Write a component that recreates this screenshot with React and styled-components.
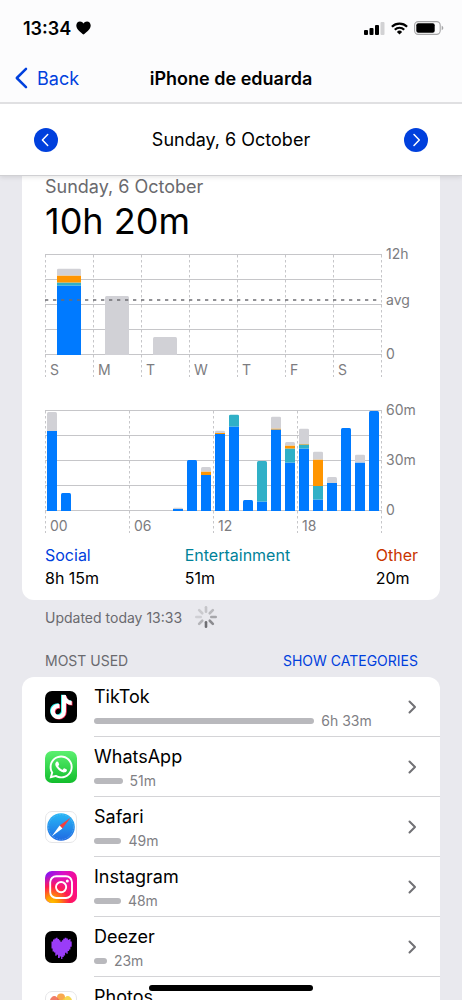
import React from 'react';
import styled, { createGlobalStyle } from 'styled-components';
import { FaTiktok, FaWhatsapp } from 'react-icons/fa';

const GlobalStyle = createGlobalStyle`
    * {
        box-sizing: border-box;
    }

    body {
        margin: 0;
        background: #e9e9ee;
        color: #000;
        font-family: Inter, 'Liberation Sans', sans-serif;
    }

    button {
        padding: 0;
        border: 0;
        background: none;
        font: inherit;
        cursor: pointer;
    }

    a {
        color: inherit;
        text-decoration: none;
    }

    svg {
        display: block;
    }
`;

const colors = {
    social: '#007aff',
    entertainment: '#30b0c7',
    other: '#ff9500',
    rest: '#d1d1d6',
};

const Page = styled.div`
    display: flex;
    flex-direction: column;
    height: 100vh;
    overflow: hidden;
`;

const Header = styled.header`
    flex: none;
    background: #fcfcfd;
    border-bottom: 1px solid #d0d0d3;
    box-shadow: 0 1px 5px rgba(0, 0, 0, 0.12);
    z-index: 1;
`;

const StatusBar = styled.div`
    display: flex;
    justify-content: space-between;
    align-items: center;
    height: 54px;
    padding: 2px 18px 0 23px;
`;

const Clock = styled.div`
    display: flex;
    align-items: center;
    gap: 5px;
    font-size: 18px;
    font-weight: 600;
`;

const StatusIcons = styled.div`
    display: flex;
    align-items: center;
    gap: 6px;
`;

const NavBar = styled.nav`
    display: grid;
    grid-template-columns: 1fr auto 1fr;
    align-items: center;
    height: 50px;
    padding: 0 15px;
    border-bottom: 2px solid #e0e0e2;
`;

const BackLink = styled.a`
    display: flex;
    align-items: center;
    gap: 9px;
    color: #0040dd;
    font-size: 18px;
`;

const Title = styled.h1`
    margin: 0;
    font-size: 18px;
    font-weight: 600;
`;

const DateBar = styled.div`
    display: flex;
    justify-content: space-between;
    align-items: center;
    height: 71px;
    padding: 0 34px;
    background: #fff;
    font-size: 18px;
`;

const Content = styled.main`
    display: flex;
    flex-direction: column;
    flex: 1;
    min-height: 0;
    padding: 0 22px;
    overflow: hidden;
`;

const UsageCard = styled.section`
    flex: none;
    padding: 1px 22px 10px 23px;
    border-radius: 0 0 12px 12px;
    background: #fff;
`;

const UsageDate = styled.div`
    color: #6a6a6e;
    font-size: 18px;
    line-height: 20px;
`;

const Total = styled.div`
    font-size: 36px;
    line-height: 49px;
`;

const Chart = styled.svg`
    width: 100%;
    height: auto;
    margin-bottom: ${props => props.$gap || 0}px;

    text {
        fill: #7c7c80;
        font-size: 14px;
    }
`;

const Legend = styled.dl`
    display: flex;
    justify-content: space-between;
    margin: 0;
    font-size: 16px;
    line-height: 23px;

    dd {
        margin: 0;
    }
`;

const LegendName = styled.dt`
    color: ${props => props.$color};
`;

const Updated = styled.div`
    display: flex;
    align-items: center;
    flex: none;
    gap: 12px;
    height: 34px;
    padding: 0 23px;
    color: #6a6a6e;
    font-size: 14px;
`;

const ListHeader = styled.div`
    display: flex;
    justify-content: space-between;
    align-items: center;
    flex: none;
    height: 43px;
    padding: 10px 22px 0 23px;
    color: #6a6a6e;
    font-size: 14px;

    h2 {
        margin: 0;
        font-size: 14px;
        font-weight: 400;
    }

    button {
        color: #0040dd;
    }
`;

const AppList = styled.ul`
    flex: none;
    margin: 0;
    padding: 0;
    border-radius: 12px 12px 0 0;
    background: #fff;
    list-style: none;
`;

const AppRow = styled.a`
    display: flex;
    gap: 17px;
    height: 60px;
    padding-left: 23px;

    > svg {
        flex: none;
        margin-top: 14px;
    }
`;

const AppBody = styled.div`
    display: flex;
    align-items: center;
    flex: 1;
    gap: 8px;
    padding-right: 22px;
    border-bottom: 1px solid #d4d4d7;
`;

const AppInfo = styled.div`
    flex: 1;
    padding-top: 4px;
`;

const AppName = styled.div`
    font-size: 18px;
    line-height: 24px;
`;

const Usage = styled.div`
    display: flex;
    align-items: center;
    gap: 7px;
    color: #808084;
    font-size: 14px;
    line-height: 24px;
`;

const UsageBar = styled.div`
    height: 6px;
    border-radius: 3px;
    background: #b9b9bd;
`;

const HomeIndicator = styled.div`
    position: fixed;
    bottom: 9px;
    left: 50%;
    width: 164px;
    height: 6px;
    border-radius: 3px;
    background: #000;
    transform: translateX(-50%);
    z-index: 2;
`;

const Heart = () => (
    <svg width="15" height="14" viewBox="0 0 15 14">
        <path d="M7.5 13.6C5.6 12 .3 8.600.3 4.500.3 2 2 .4 4 .4c1.500 0 2.800.8 3.500 2.100C8.200 1.200 9.500.4 11 .4c2 0 3.700 1.600 3.700 4.100 0 4.100-5.300 7.500-7.200 9.100z" />
    </svg>
);

const Signal = () => (
    <svg width="21" height="13" viewBox="0 0 21 13">
        <rect x="0" y="8" width="4" height="5" rx="1" />
        <rect x="5.500" y="6" width="4" height="7" rx="1" />
        <rect x="11" y="3" width="4" height="10" rx="1" />
        <rect x="16.500" y="0" width="4" height="13" rx="1" fill="#d2d2d4" />
    </svg>
);

const Wifi = () => (
    <svg width="17" height="13" viewBox="0 0 17 13" fill="none" stroke="#000" strokeWidth="2.200">
        <path d="M.9 4.700a10.800 10.800 0 0 1 15.200 0" />
        <path d="M3.800 7.700a6.700 6.700 0 0 1 9.400 0" />
        <path d="M8.500 12.600L5.900 9.900a3.700 3.700 0 0 1 5.200 0z" fill="#000" stroke="none" />
    </svg>
);

const Battery = () => (
    <svg width="30" height="14" viewBox="0 0 30 14">
        <rect x=".6" y=".6" width="25.600" height="12.800" rx="3.600" fill="none" stroke="#a6a6a8" strokeWidth="1.100" />
        <rect x="2.300" y="2.200" width="18.400" height="9.600" rx="2" />
        <path d="M27.700 4.800c1 .4 1.600 1.200 1.600 2.200s-.6 1.800-1.600 2.200z" fill="#a6a6a8" />
    </svg>
);

const CircleArrow = ({ next }) => (
    <svg width="24" height="24" viewBox="0 0 24 24" fill="none">
        <circle cx="12" cy="12" r="12" fill="#0040dd" />
        <path
            d={next ? 'M10 6.500l5.300 5.500-5.300 5.500' : 'M13.700 6.500L8.400 12l5.300 5.500'}
            stroke="#fff"
            strokeWidth="1.500"
            strokeLinecap="round"
            strokeLinejoin="round"
        />
    </svg>
);

const Chevron = () => (
    <svg width="10" height="16" viewBox="0 0 10 16" fill="none" stroke="#717175" strokeWidth="2" strokeLinecap="round" strokeLinejoin="round">
        <path d="M1.500 2.500L7 8l-5.500 5.500" />
    </svg>
);

// clockwise from the top, darkest one at the bottom
const spokeColors = ['#c4c4c8', '#b9b9bd', '#a6a6aa', '#8c8c90', '#6f6f73', '#b4b4b8', '#cfcfd4', '#cacace'];

const Spinner = () => (
    <svg width="24" height="24" viewBox="0 0 24 24">
        {spokeColors.map((color, i) => (
            <rect key={i} x="10.700" y="1" width="2.600" height="7" rx="1.300" fill={color} transform={`rotate(${i * 45} 12 12)`} />
        ))}
    </svg>
);

const TikTokIcon = () => (
    <svg width="32" height="32" viewBox="0 0 32 32">
        <rect width="32" height="32" rx="7" />
        <FaTiktok x="3.400" y="3.400" size="24" color="#25f4ee" />
        <FaTiktok x="5" y="4.700" size="24" color="#fe2c55" />
        <FaTiktok x="4.200" y="4.100" size="24" color="#fff" />
    </svg>
);

const WhatsAppIcon = () => (
    <svg width="32" height="32" viewBox="0 0 32 32">
        <defs>
            <linearGradient id="whatsapp" x1="0" y1="0" x2="0" y2="1">
                <stop offset="0" stopColor="#5cf070" />
                <stop offset="1" stopColor="#12bd2c" />
            </linearGradient>
        </defs>
        <rect width="32" height="32" rx="7" fill="url(#whatsapp)" />
        <FaWhatsapp x="2.900" y="2.800" size="26.400" color="#fff" />
    </svg>
);

const SafariIcon = () => (
    <svg width="32" height="32" viewBox="0 0 32 32">
        <defs>
            <linearGradient id="safari" x1="0" y1="0" x2="0" y2="1">
                <stop offset="0" stopColor="#27b8f6" />
                <stop offset="1" stopColor="#2069e2" />
            </linearGradient>
        </defs>
        <rect x=".5" y=".5" width="31" height="31" rx="6.500" fill="#fff" stroke="#e6e6e8" />
        <circle cx="16" cy="16" r="13.800" fill="url(#safari)" />
        <circle cx="16" cy="16" r="12.400" fill="none" stroke="#8cc8f7" strokeWidth="1" strokeDasharray=".4 1.200" />
        <path d="M25.500 6.700L17.400 17.500 14.600 14.500z" fill="#f43f3d" />
        <path d="M6.600 25.400l8-10.900 2.800 3z" fill="#fff" />
    </svg>
);

const InstagramIcon = () => (
    <svg width="32" height="32" viewBox="0 0 32 32">
        <defs>
            <linearGradient id="instagram" x1="0" y1="0" x2="1" y2="0.400">
                <stop offset="0" stopColor="#7a14f5" />
                <stop offset=".5" stopColor="#d810c8" />
                <stop offset="1" stopColor="#fb0a86" />
            </linearGradient>
            <radialGradient id="instagramGlow" cx=".2" cy="1.050" r=".95">
                <stop offset="0" stopColor="#ffd000" />
                <stop offset=".25" stopColor="#ff9a00" />
                <stop offset=".6" stopColor="#ff1a50" />
                <stop offset="1" stopColor="#ff1a80" stopOpacity="0" />
            </radialGradient>
        </defs>
        <rect width="32" height="32" rx="7" fill="url(#instagram)" />
        <rect width="32" height="32" rx="7" fill="url(#instagramGlow)" />
        <g fill="none" stroke="#fff" strokeWidth="1.900">
            <rect x="5.200" y="5.200" width="21.800" height="21.800" rx="6" />
            <circle cx="16.100" cy="16.100" r="5.100" />
        </g>
        <circle cx="22.300" cy="9.900" r="1.500" fill="#fff" />
    </svg>
);

const DeezerIcon = () => (
    <svg width="32" height="32" viewBox="0 0 32 32">
        <rect width="32" height="32" rx="7" />
        <path
            d="M6.500 10.500H8V8.500h1.500V7.500H11v-.8h1.600v1.200h1.500v1.400h1.300v1.500h1.400V9.300h1.400V7.800h1.500V6.700h1.700v.8h1.500v1.200h1.400v-.7h1.200v2.600h1.200v5.200h-1.300v2.800h-1.300v1.500h-1.400v2.600h-1.300v-1h-1.300v2.800h-1.400v1.500h-1.300v1.900h-1.300v-2.300h-1.300v1.300H13v-3.200h-1.400v1h-1.300v-3.100H9v-1.200H7.600v-3H6.500z"
            fill="#9a3cf8"
        />
    </svg>
);

const petals = ['#f8a03c', '#f5d33f', '#b6d04c', '#65bd8b', '#6ba6dc', '#9b87cf', '#d0739f', '#ef6f58'];

const PhotosIcon = () => (
    <svg width="32" height="32" viewBox="0 0 32 32">
        <rect x=".5" y=".5" width="31" height="31" rx="6.500" fill="#fff" stroke="#e6e6e8" />
        {petals.map((color, i) => (
            <rect key={color} x="12" y="2.500" width="8" height="12.500" rx="4" fill={color} opacity=".9" transform={`rotate(${i * 45} 16 16)`} />
        ))}
    </svg>
);

// segment values are given in order from the bottom of the bar
const week = [
    { label: 'S', segments: [['social', 69.5], ['entertainment', 3], ['other', 7], ['rest', 7]] },
    { label: 'M', segments: [['rest', 59]] },
    { label: 'T', segments: [['rest', 18]] },
    { label: 'W', segments: [] },
    { label: 'T', segments: [] },
    { label: 'F', segments: [] },
    { label: 'S', segments: [] },
];

const hours = {
    0: [['social', 80], ['rest', 19]],
    1: [['social', 18]],
    9: [['social', 2], ['rest', 1.5]],
    10: [['social', 51]],
    11: [['social', 36], ['other', 3.5], ['rest', 4.5]],
    12: [['social', 77], ['other', 1], ['rest', 2.5]],
    13: [['social', 84.5], ['entertainment', 12]],
    14: [['social', 11]],
    15: [['social', 9.5], ['entertainment', 40.5]],
    16: [['social', 81.5], ['other', 1], ['rest', 12]],
    17: [['social', 48.5], ['entertainment', 14], ['other', 3], ['rest', 3.5]],
    18: [['social', 62.5], ['entertainment', 4], ['other', 0.5], ['rest', 15.5]],
    19: [['social', 11.5], ['entertainment', 13.5], ['other', 26.5], ['rest', 8]],
    20: [['social', 28], ['rest', 6]],
    21: [['social', 83]],
    22: [['social', 48.5], ['rest', 8]],
    23: [['social', 100]],
};

const apps = [
    { name: 'TikTok', minutes: 393, time: '6h 33m', Icon: TikTokIcon },
    { name: 'WhatsApp', minutes: 51, time: '51m', Icon: WhatsAppIcon },
    { name: 'Safari', minutes: 49, time: '49m', Icon: SafariIcon },
    { name: 'Instagram', minutes: 48, time: '48m', Icon: InstagramIcon },
    { name: 'Deezer', minutes: 23, time: '23m', Icon: DeezerIcon },
    { name: 'Photos', Icon: PhotosIcon },
];

const Bar = ({ id, x, base, width, segments }) => {
    const height = segments.reduce((sum, [, value]) => sum + value, 0);
    let y = base;

    return (
        <g clipPath={`url(#${id})`}>
            <clipPath id={id}>
                <path d={`M${x} ${base}V${base - height + 1.5}q0-1.500 1.500-1.500h${width - 3}q1.500 0 1.500 1.500V${base}z`} />
            </clipPath>
            {segments.map(([kind, value]) => {
                y -= value;
                return <rect key={kind} x={x} y={y} width={width} height={value} fill={colors[kind]} />;
            })}
        </g>
    );
};

const Grid = ({ columns }) => (
    <g stroke="#c6c6c9" fill="none">
        {[0, 1, 2, 3, 4].map(i => (
            <path key={i} d={`M0 ${8.5 + i * 25}H337`} />
        ))}
        {Array.from({ length: columns + 1 }, (_, i) => (
            <path key={i} d={`M${0.5 + i * (336 / columns)} 9V131`} strokeDasharray="2.500 2.500" />
        ))}
    </g>
);

const WeekChart = () => (
    <Chart viewBox="0 0 373 132" $gap={24} role="img" aria-label="Daily usage">
        <Grid columns={7} />
        {week.map(({ label, segments }, i) => (
            <g key={i}>
                {segments.length > 0 && <Bar id={`day${i}`} x={12 + i * 48} base={109} width={24} segments={segments} />}
                <text x={5 + i * 48} y="129">{label}</text>
            </g>
        ))}
        <path d="M0 54H336" stroke="#6e6e73" strokeWidth="1.500" strokeDasharray="3.300 4.700" />
        <text x="341" y="13">12h</text>
        <text x="341" y="59">avg</text>
        <text x="341" y="113">0</text>
    </Chart>
);

const HourChart = () => (
    <Chart viewBox="0 0 373 132" $gap={10} role="img" aria-label="Hourly usage">
        <Grid columns={4} />
        {Object.entries(hours).map(([hour, segments]) => (
            <Bar key={hour} id={`hour${hour}`} x={2 + hour * 14} base={109} width={10} segments={segments} />
        ))}
        {['00', '06', '12', '18'].map((label, i) => (
            <text key={label} x={5 + i * 84} y="129">{label}</text>
        ))}
        <text x="341" y="13">60m</text>
        <text x="341" y="63">30m</text>
        <text x="341" y="113">0</text>
    </Chart>
);

const App = () => {
    const longest = apps[0].minutes;

    return (
        <Page>
            <GlobalStyle />
            <Header>
                <StatusBar>
                    <Clock>13:34 <Heart /></Clock>
                    <StatusIcons>
                        <Signal />
                        <Wifi />
                        <Battery />
                    </StatusIcons>
                </StatusBar>
                <NavBar>
                    <BackLink href="#back">
                        <svg width="13" height="22" viewBox="0 0 13 22" fill="none" stroke="#0040dd" strokeWidth="2.500" strokeLinecap="round" strokeLinejoin="round">
                            <path d="M11 1.800L1.800 11l9.200 9.200" />
                        </svg>
                        Back
                    </BackLink>
                    <Title>iPhone de eduarda</Title>
                </NavBar>
                <DateBar>
                    <button type="button" aria-label="Previous day"><CircleArrow /></button>
                    <span>Sunday, 6 October</span>
                    <button type="button" aria-label="Next day"><CircleArrow next /></button>
                </DateBar>
            </Header>
            <Content>
                <UsageCard>
                    <UsageDate>Sunday, 6 October</UsageDate>
                    <Total>10h 20m</Total>
                    <WeekChart />
                    <HourChart />
                    <Legend>
                        <div>
                            <LegendName $color="#0040dd">Social</LegendName>
                            <dd>8h 15m</dd>
                        </div>
                        <div>
                            <LegendName $color="#008299">Entertainment</LegendName>
                            <dd>51m</dd>
                        </div>
                        <div>
                            <LegendName $color="#c93400">Other</LegendName>
                            <dd>20m</dd>
                        </div>
                    </Legend>
                </UsageCard>
                <Updated>Updated today 13:33 <Spinner /></Updated>
                <ListHeader>
                    <h2>MOST USED</h2>
                    <button type="button">SHOW CATEGORIES</button>
                </ListHeader>
                <AppList>
                    {apps.map(({ name, minutes, time, Icon }) => (
                        <li key={name}>
                            <AppRow href={`#${name.toLowerCase()}`}>
                                <Icon />
                                <AppBody>
                                    <AppInfo>
                                        <AppName>{name}</AppName>
                                        {time ? (
                                            <Usage>
                                                <UsageBar style={{ width: `${(minutes / longest) * 72}%` }} />
                                                {time}
                                            </Usage>
                                        ) : <Usage>&nbsp;</Usage>}
                                    </AppInfo>
                                    <Chevron />
                                </AppBody>
                            </AppRow>
                        </li>
                    ))}
                </AppList>
            </Content>
            <HomeIndicator />
        </Page>
    );
};

export default App;
